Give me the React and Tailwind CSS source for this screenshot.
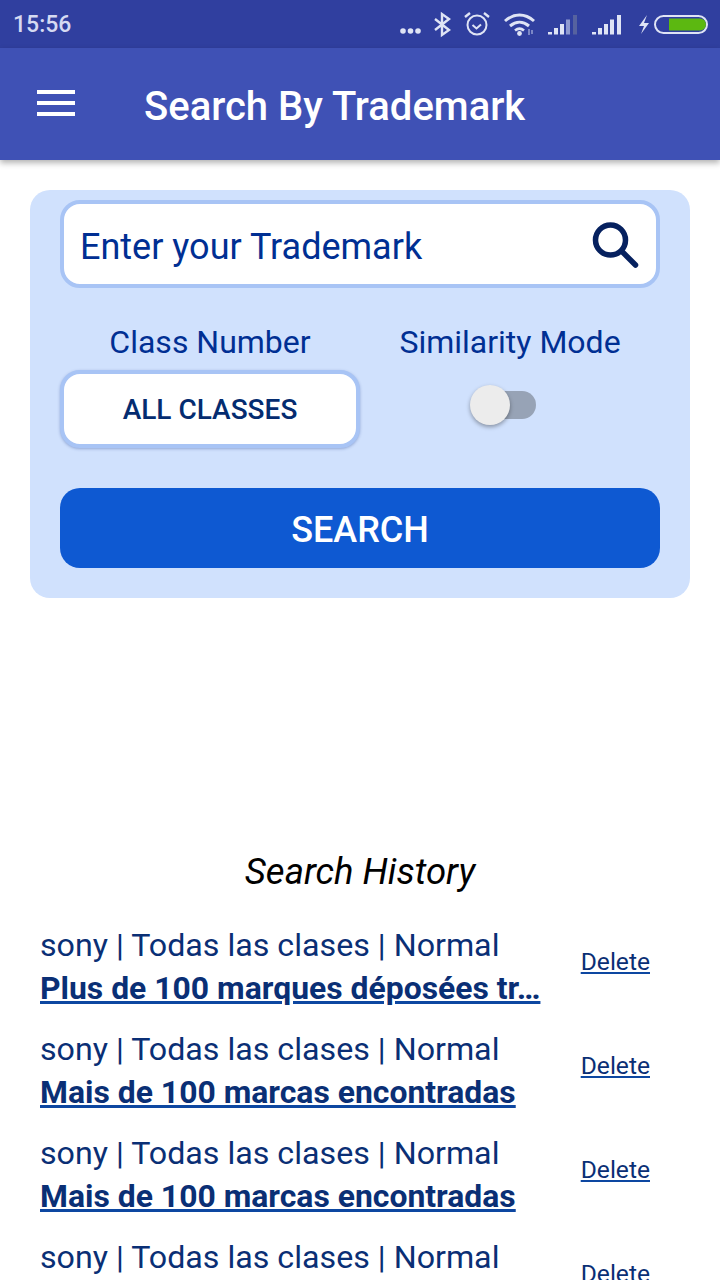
import React from 'react';

const font = { fontFamily: 'Roboto, sans-serif' };

const history = [
  'Plus de 100 marques déposées tr…',
  'Mais de 100 marcas encontradas',
  'Mais de 100 marcas encontradas',
  '',
];

const StatusIcons = () => (
  <svg width="340" height="48" viewBox="0 0 340 48" className="absolute right-0 top-0">
    {/* dots */}
    <circle cx="23" cy="31" r="2.8" fill="#dfe4f5" />
    <circle cx="30.500" cy="31" r="2.8" fill="#dfe4f5" />
    <circle cx="38" cy="31" r="2.8" fill="#dfe4f5" />
    {/* bluetooth */}
    <path d="M55 19l14 11-7 5V14l7 5-14 11" fill="none" stroke="#dfe4f5" strokeWidth="2.4" />
    {/* alarm */}
    <circle cx="97" cy="25" r="9.5" fill="none" stroke="#dfe4f5" strokeWidth="2" />
    <path d="M92.5 25l4 3.5 4.5-4" fill="none" stroke="#dfe4f5" strokeWidth="2" />
    <path d="M85 17l5-4M104 13l5 4" fill="none" stroke="#dfe4f5" strokeWidth="2.4" />
    {/* wifi */}
    <path d="M125 21c9-8 20-8 29 0" fill="none" stroke="#dfe4f5" strokeWidth="3" />
    <path d="M130 26c6-5 13-5 19 0" fill="none" stroke="#dfe4f5" strokeWidth="3" />
    <path d="M135 30.5c3-2.500 6-2.500 9 0" fill="none" stroke="#dfe4f5" strokeWidth="2.600" />
    <circle cx="139.500" cy="33.500" r="2.400" fill="#dfe4f5" />
    <path d="M149 29v6M152 30v4" stroke="#8f9ad0" strokeWidth="1.600" />
    {/* signal 1 */}
    <rect x="168" y="32" width="4" height="2.500" fill="#dfe4f5" />
    <rect x="174" y="28" width="4" height="6.500" fill="#dfe4f5" />
    <rect x="180" y="24" width="4" height="10.500" fill="#dfe4f5" />
    <rect x="186" y="19.500" width="4" height="15" fill="#8f9ad0" />
    <rect x="193" y="15" width="4" height="19.500" fill="#56629f" />
    {/* signal 2 */}
    <rect x="212" y="32" width="4" height="2.500" fill="#dfe4f5" />
    <rect x="218" y="28" width="4" height="6.500" fill="#dfe4f5" />
    <rect x="224" y="24" width="4" height="10.500" fill="#dfe4f5" />
    <rect x="230" y="19.500" width="4" height="15" fill="#dfe4f5" />
    <rect x="237" y="15" width="4" height="19.500" fill="#dfe4f5" />
    {/* charge bolt */}
    <path d="M267 15l-8 11h5l-3 8 8-11h-5z" fill="#dfe4f5" />
    {/* battery */}
    <rect x="275" y="16" width="52" height="17" rx="8.500" fill="none" stroke="#dfe4f5" strokeWidth="2" />
    <path d="M289 18.500h31a6 6 0 0 1 6 6 6 6 0 0 1-6 6h-31z" fill="#5cb811" />
  </svg>
);

export default function App() {
  return (
    <div className="relative w-[720px] h-[1280px] overflow-hidden bg-white" style={font}>
      {/* status bar */}
      <div className="relative h-12 bg-[#303f9f] flex items-center pl-[13px] pt-[3px]">
        <span className="text-[23px] font-medium text-[#d5daf2]">15:56</span>
        <StatusIcons />
      </div>

      {/* app bar */}
      <div className="h-28 bg-[#3f51b5] flex items-center shadow-[0_3px_6px_rgba(0,0,0,0.3)] relative">
        <div className="ml-[37px] mb-[2px] w-[38px] flex flex-col gap-[7px]">
          <div className="h-1 bg-white" />
          <div className="h-1 bg-white" />
          <div className="h-1 bg-white" />
        </div>
        <h1 className="ml-[69px] mt-[5px] text-[40px] font-medium text-white leading-none">Search By Trademark</h1>
      </div>

      {/* search card */}
      <div className="mx-[30px] mt-[30px] h-[408px] rounded-[20px] bg-[#d0e1fd] px-[30px] pt-[10px]">
        <div className="h-[88px] rounded-[20px] bg-white border-4 border-[#a8c4f5] flex items-center justify-between pl-4 pr-[14px]">
          <span className="text-[36px] text-[#002f93] mt-[6px]">Enter your Trademark</span>
          <svg width="52" height="52" viewBox="0 0 52 52" fill="none" stroke="#06215f" strokeWidth="5.500">
            <circle cx="20.500" cy="22" r="15" />
            <path d="M31.500 33l14 14" strokeLinecap="round" />
          </svg>
        </div>

        <div className="flex mt-[32px]">
          <div className="w-[300px] flex flex-col">
            <span className="text-[32px] leading-[44px] text-center text-[#002f93]">Class Number</span>
            <div className="mt-[6px] h-[78px] rounded-[20px] bg-white border-4 border-[#a8c4f5] shadow-[0_1px_3px_rgba(30,60,140,0.35)] flex items-center justify-center pt-[2px] text-[28px] font-medium text-[#042c70]">
              ALL CLASSES
            </div>
          </div>
          <div className="w-[300px] flex flex-col items-center">
            <span className="text-[32px] leading-[44px] text-center text-[#002f93]">Similarity Mode</span>
            <div className="relative mt-[21px] mr-[14px] w-[66px] h-[40px] flex items-center">
              <div className="absolute left-[8px] right-0 h-7 rounded-full bg-[#97a3b6]" />
              <div className="absolute left-0 top-0 w-10 h-10 rounded-full bg-[#ececec] shadow-[0_2px_4px_rgba(0,0,0,0.35)]" />
            </div>
          </div>
        </div>

        <div className="mt-[40px] h-20 rounded-[20px] bg-[#0e59d2] flex items-center justify-center pt-[4px] text-[36px] font-medium text-white">
          SEARCH
        </div>
      </div>

      {/* history */}
      <div className="mt-[249px] text-center text-[36.5px] italic text-black leading-[50px]">Search History</div>

      <div className="mt-[27px] pl-10 pr-[70px]">
        {history.map((title, i) => (
          <div key={i} className="h-[104px] flex justify-between">
            <div className="w-[510px]">
              <div className="text-[32.2px] leading-[42px] text-[#0a2f75] whitespace-nowrap">sony | Todas las clases | Normal</div>
              <div className="text-[31.9px] leading-[44px] font-bold text-[#0a2f75] underline decoration-[#0d47a1] whitespace-nowrap">{title}</div>
            </div>
            <span className="mt-[21px] text-[24.6px] leading-[34px] text-[#0a2f75] underline decoration-[#0d47a1]">Delete</span>
          </div>
        ))}
      </div>
    </div>
  );
}
